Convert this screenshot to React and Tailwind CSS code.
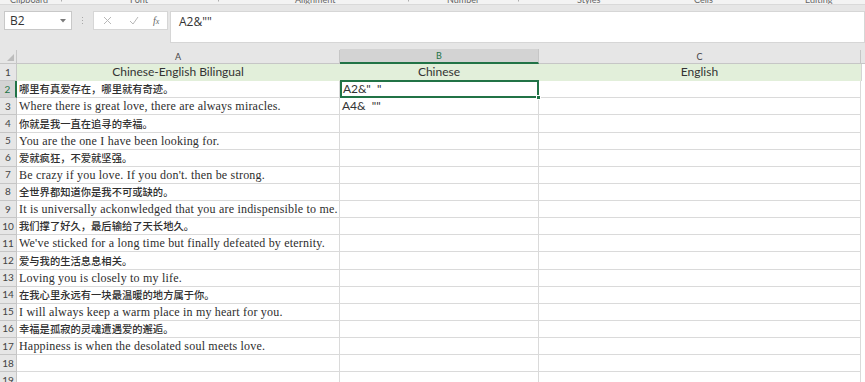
import React from "react";

const rows = [
  ["哪里有真爱存在，哪里就有奇迹。", "cn"],
  ["Where there is great love, there are always miracles.", "en"],
  ["你就是我一直在追寻的幸福。", "cn"],
  ["You are the one I have been looking for.", "en"],
  ["爱就疯狂，不爱就坚强。", "cn"],
  ["Be crazy if you love. If you don't. then be strong.", "en"],
  ["全世界都知道你是我不可或缺的。", "cn"],
  ["It is universally ackonwledged that you are indispensible to me.", "en"],
  ["我们撑了好久，最后输给了天长地久。", "cn"],
  ["We've sticked for a long time but finally defeated by eternity.", "en"],
  ["爱与我的生活息息相关。", "cn"],
  ["Loving you is closely to my life.", "en"],
  ["在我心里永远有一块最温暖的地方属于你。", "cn"],
  ["I will always keep a warm place in my heart for you.", "en"],
  ["幸福是孤寂的灵魂遭遇爱的邂逅。", "cn"],
  ["Happiness is when the desolated soul meets love.", "en"],
];

const bText = { 0: 'A2&"  "', 1: 'A4&  ""' };

function Launcher() {
  return (
    <svg width="5" height="5" viewBox="0 0 5 5" className="shrink-0">
      <path d="M0.5 0.5h4v4" fill="none" stroke="#9a9a9a" strokeWidth="0.8" />
    </svg>
  );
}

function Group({ w, label, pl, launcher }) {
  return (
    <div className={`flex h-full items-center ${w}`}>
      <span className={`${pl} text-[9px] leading-[9px] text-[#666]`}>{label}</span>
      {launcher && <span className="ml-auto mr-[3px]"><Launcher /></span>}
    </div>
  );
}

export default function App() {
  const sans = { fontFamily: 'Lato, "Open Sans", "Liberation Sans", sans-serif' };
  return (
    <div className="w-[865px] h-[382px] overflow-hidden bg-[#e6e6e6] flex flex-col" style={sans}>
      {/* ribbon group labels (cut off) */}
      <div className="h-[5px] shrink-0 overflow-hidden bg-[#f3f3f3] border-b border-[#d9d9d9]">
        <div className="flex h-[9px] -mt-[5px]">
          <Group w="w-[65px]" label="Clipboard" pl="pl-[10px]" launcher />
          <Group w="w-[157px]" label="Font" pl="pl-[65px]" launcher />
          <Group w="w-[190px]" label="Alignment" pl="pl-[73px]" launcher />
          <Group w="w-[110px]" label="Number" pl="pl-[35px]" launcher />
          <Group w="w-[130px]" label="Styles" pl="pl-[55px]" />
          <Group w="w-[98px]" label="Cells" pl="pl-[42px]" />
          <Group w="w-[115px]" label="Editing" pl="pl-[55px]" />
        </div>
      </div>
      {/* formula bar */}
      <div className="h-[39px] shrink-0 flex items-start pt-[6px] bg-[#e6e6e6]">
        <div className="ml-[4px] w-[68px] h-[19px] bg-white border border-[#c8c8c8] flex items-center pl-[5px] pr-[5px]">
          <span className="text-[12px] text-[#333]" style={{ fontFamily: '"Open Sans", sans-serif' }}>B2</span>
          <svg width="6" height="4" viewBox="0 0 6 4" className="ml-auto">
            <path d="M0 0h6L3 3.5z" fill="#7a7a7a" />
          </svg>
        </div>
        <div className="w-[21px] h-[19px] flex flex-col items-center justify-center gap-[2px]">
          <span className="w-[1px] h-[1px] bg-[#a8a8a8]" />
          <span className="w-[1px] h-[1px] bg-[#a8a8a8]" />
          <span className="w-[1px] h-[1px] bg-[#a8a8a8]" />
        </div>
        <div className="w-[75px] h-[19px] bg-white border border-[#d6d6d6] flex items-center">
          <svg width="9" height="9" viewBox="0 0 9 9" className="ml-[9px]">
            <path d="M1 1l7 7M8 1l-7 7" stroke="#b8b8b8" strokeWidth="1" />
          </svg>
          <svg width="10" height="9" viewBox="0 0 10 9" className="ml-[17px]">
            <path d="M1 5l3 3 5-7" fill="none" stroke="#b8b8b8" strokeWidth="1" />
          </svg>
          <span className="ml-[14px] text-[10px] italic text-[#666]" style={{ fontFamily: '"Liberation Serif", serif' }}>
            f<span className="text-[8px]">x</span>
          </span>
        </div>
        <div className="ml-[2px] flex-1 h-[32px] bg-white border border-[#d6d6d6] pl-[8px] leading-[15px]">
          <span className="text-[12px] text-[#333]" style={{ fontFamily: '"Open Sans", sans-serif' }}>A2&amp;""</span>
        </div>
      </div>
      {/* column headers */}
      <div className="h-[20px] shrink-0 flex items-end bg-[#e6e6e6]">
        <div className="w-[17px] h-[14px] border-r border-b border-[#c6c6c6] flex items-end justify-end pr-[2px] pb-[2px]">
          <svg width="7" height="7" viewBox="0 0 7 7">
            <path d="M7 0v7H0z" fill="#bcbcbc" />
          </svg>
        </div>
        <div className="w-[323px] h-[14px] border-r border-b border-[#c6c6c6] flex items-center justify-center text-[9px] text-[#444]">A</div>
        <div className="w-[199px] h-[15px] bg-[#d3d3d3] border-r border-[#c6c6c6] border-b-2 border-b-[#217346] flex items-center justify-center text-[9px] text-[#217346]">B</div>
        <div className="w-[322px] h-[14px] border-r border-b border-[#c6c6c6] flex items-center justify-center text-[9px] text-[#444]">C</div>
        <div className="flex-1 h-[14px] border-b border-[#c6c6c6]" />
      </div>
      {/* row 1 */}
      <div className="h-[17.13px] shrink-0 flex bg-white">
        <div className="w-[17px] h-full bg-[#e6e6e6] border-r border-b border-[#c6c6c6] flex items-center justify-center text-[10px] text-[#444]">1</div>
        <div className="w-[323px] h-full bg-[#e2efda] border-r border-b border-[#e2efda] flex items-center justify-center text-[12px] text-[#333]">Chinese-English Bilingual</div>
        <div className="w-[199px] h-full bg-[#e2efda] border-r border-b border-[#e2efda] flex items-center justify-center text-[12px] text-[#333]">Chinese</div>
        <div className="w-[322px] h-full bg-[#e2efda] border-r border-b border-[#e2efda] flex items-center justify-center text-[12px] text-[#333]">English</div>
        <div className="flex-1 h-full bg-white border-l border-[#d4d4d4]" />
      </div>
      {[...rows, ["", ""], ["", ""]].map(([t, kind], i) => {
        const n = i + 2;
        const sel = n === 2;
        return (
          <div key={n} className="h-[17.13px] shrink-0 flex bg-white">
            <div
              className={
                sel
                  ? "w-[17px] h-full bg-[#d3d3d3] border-r-2 border-r-[#217346] border-b border-b-[#c6c6c6] flex items-center justify-center text-[10px] text-[#217346]"
                  : "w-[17px] h-full bg-[#e6e6e6] border-r border-b border-[#c6c6c6] flex items-center justify-center text-[10px] text-[#444]"
              }
            >
              {n}
            </div>
            <div className="w-[323px] h-full border-r border-b border-[#dadada] flex items-center pl-[2px] text-[#2e2e2e] whitespace-nowrap overflow-hidden">
              {kind === "cn" && (
                <span className="text-[10.3px] font-medium" style={{ fontFamily: '"Noto Sans CJK SC", sans-serif' }}>{t}</span>
              )}
              {kind === "en" && (
                <span className="text-[12px] leading-[14px] tracking-[0.2px]" style={{ fontFamily: '"Liberation Serif", serif' }}>{t}</span>
              )}
            </div>
            <div
              className={
                sel
                  ? "relative w-[199px] border-2 border-[#217346] -mt-[1px] h-[18.13px] flex items-center pl-[1px] text-[12px] text-[#333] whitespace-pre"
                  : "w-[199px] h-full border-r border-b border-[#dadada] flex items-center pl-[2px] text-[12px] text-[#333] whitespace-pre"
              }
            >
              {i === 1 ? bText[1] : sel ? bText[0] : ""}
              {sel && <span className="absolute -right-[4px] -bottom-[4px] w-[5px] h-[5px] bg-[#217346] border border-white" />}
            </div>
            <div className="w-[322px] h-full border-r border-b border-[#dadada]" />
            <div className="flex-1 h-full bg-white" />
          </div>
        );
      })}
    </div>
  );
}
